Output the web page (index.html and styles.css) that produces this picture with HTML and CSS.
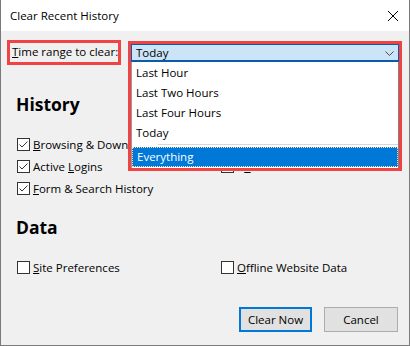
FILE: index.html
```html
<!DOCTYPE html>
<html>
<head>
<meta charset="utf-8">
<link rel="stylesheet" href="styles.css">
</head>
<body>
<div class="window">
  <div class="titlebar">
    <span class="title">Clear Recent History</span>
    <svg class="close" width="10" height="10" viewBox="0 0 10 10"><path d="M0 0L10 10M10 0L0 10" stroke="#000" stroke-width="1"/></svg>
  </div>
  <div class="body">
    <div class="range-row">
      <div class="range-label"><u>T</u>ime range to clear:</div>
      <div class="combo-slot">
        <div class="dropdown">
          <div class="combo-face">
            <span>Today</span>
            <svg class="chev" width="9" height="5" viewBox="0 0 9 5"><path d="M0.5 0.5L4.5 4.5L8.5 0.5" fill="none" stroke="#4a4a4a" stroke-width="1"/></svg>
          </div>
          <div class="list">
            <div class="item">Last Hour</div>
            <div class="item">Last Two Hours</div>
            <div class="item">Last Four Hours</div>
            <div class="item">Today</div>
            <div class="sep"></div>
            <div class="item selected">Everything</div>
          </div>
        </div>
      </div>
    </div>

    <h2 class="heading history-h">History</h2>
    <div class="checks history-checks">
      <div class="check"><span class="box checked"><svg width="11" height="11" viewBox="0 0 11 11"><path d="M1.5 5.5L4 8L9.5 2.5" fill="none" stroke="#333" stroke-width="1"/></svg></span><span><u>B</u>rowsing &amp; Download History</span></div>
      <div class="check"><span class="box checked"><svg width="11" height="11" viewBox="0 0 11 11"><path d="M1.5 5.5L4 8L9.5 2.5" fill="none" stroke="#333" stroke-width="1"/></svg></span><span><u>C</u>ookies</span></div>
      <div class="check"><span class="box checked"><svg width="11" height="11" viewBox="0 0 11 11"><path d="M1.5 5.5L4 8L9.5 2.5" fill="none" stroke="#333" stroke-width="1"/></svg></span><span>Active <u>L</u>ogins</span></div>
      <div class="check"><span class="box checked"><svg width="11" height="11" viewBox="0 0 11 11"><path d="M1.5 5.5L4 8L9.5 2.5" fill="none" stroke="#333" stroke-width="1"/></svg></span><span>C<u>a</u>che</span></div>
      <div class="check"><span class="box checked"><svg width="11" height="11" viewBox="0 0 11 11"><path d="M1.5 5.5L4 8L9.5 2.5" fill="none" stroke="#333" stroke-width="1"/></svg></span><span><u>F</u>orm &amp; Search History</span></div>
    </div>

    <h2 class="heading data-h">Data</h2>
    <div class="checks data-checks">
      <div class="check"><span class="box"></span><span><u>S</u>ite Preferences</span></div>
      <div class="check"><span class="box"></span><span><u>O</u>ffline Website Data</span></div>
    </div>

    <div class="buttons">
      <button class="btn default">Clear Now</button>
      <button class="btn">Cancel</button>
    </div>
  </div>
</div>
</body>
</html>
```

FILE: styles.css
```css
html, body {
  margin: 0;
  padding: 0;
  background: #f0f0f0;
}

body {
  font-family: "Open Sans", "Noto Sans", sans-serif;
  font-size: 11.5px;
  color: #000;
}

u {
  text-decoration: underline;
  text-underline-offset: 1px;
}

.window {
  width: 410px;
  height: 346px;
  box-sizing: border-box;
  border: 1px solid #7a7a7a;
  border-top: none;
  display: flex;
  flex-direction: column;
  background: #f0f0f0;
}

.titlebar {
  height: 31px;
  flex: none;
  background: #fff;
  display: flex;
  align-items: center;
  justify-content: space-between;
  padding: 0 11px 0 9px;
}

.title {
  font-size: 11.5px;
  line-height: 15px;
}

.close {
  display: block;
}

.body {
  flex: 1;
  display: flex;
  flex-direction: column;
  padding: 9px 11px 13px 0;
  min-height: 0;
}

.range-row {
  display: flex;
  align-items: flex-start;
}

.range-label {
  margin-left: 6px;
  width: 114px;
  height: 25px;
  box-sizing: border-box;
  border: 3px solid #f04343;
  padding-left: 2px;
  line-height: 18px;
  white-space: nowrap;
}

.combo-slot {
  position: relative;
  margin-left: 10px;
  margin-top: 4px;
  width: 268px;
  height: 18px;
}

.dropdown {
  position: absolute;
  top: -3px;
  left: -3px;
  width: 268px;
  border: 3px solid #f04343;
  z-index: 2;
}

.combo-face {
  height: 18px;
  box-sizing: border-box;
  border: 1px solid #0a5ca8;
  border-bottom-width: 2px;
  background: #cce4f7;
  display: flex;
  align-items: center;
  justify-content: space-between;
  padding: 0 4px 0 4px;
  line-height: 15px;
}

.chev {
  display: block;
  margin-top: 1px;
}

.list {
  background: #fff;
  border-left: 1px solid #9a9a9a;
  border-right: 1px solid #828282;
  padding-top: 1px;
  padding-bottom: 1px;
}

.item {
  height: 20px;
  line-height: 20px;
  padding-left: 4px;
}

.sep {
  height: 1px;
  margin: 1px 0 2px 26px;
  background: #d7d7d7;
}

.item.selected {
  background: #0078d7;
  color: #fff;
  box-sizing: border-box;
  border: 1px dotted #f3e6b0;
  padding-left: 4px;
  line-height: 18px;
}

.heading {
  margin: 0;
  font-size: 17.5px;
  font-weight: 700;
  line-height: 24px;
  margin-left: 15px;
}

.history-h {
  margin-top: 27px;
}

.data-h {
  margin-top: 16px;
}

.checks {
  display: grid;
  grid-template-columns: 204px 1fr;
  grid-auto-rows: 22px;
  margin-left: 16px;
}

.history-checks {
  margin-top: 17px;
}

.data-checks {
  margin-top: 17px;
}

.check {
  display: flex;
  align-items: center;
  white-space: nowrap;
  line-height: 15px;
}

.box {
  width: 13px;
  height: 13px;
  box-sizing: border-box;
  border: 1px solid #333;
  background: #fff;
  margin-right: 3px;
  flex: none;
  display: flex;
  align-items: center;
  justify-content: center;
}

.box svg {
  display: block;
}

.buttons {
  margin-top: auto;
  display: flex;
  justify-content: flex-end;
  gap: 12px;
}

.btn {
  font-family: "Open Sans", "Noto Sans", sans-serif;
  font-size: 11.5px;
  color: #000;
  height: 25px;
  padding: 0;
  background: #e1e1e1;
  border: 1px solid #adadad;
  box-sizing: border-box;
  width: 74px;
}

.btn.default {
  width: 73px;
  border: 2px solid #0078d7;
}
```
